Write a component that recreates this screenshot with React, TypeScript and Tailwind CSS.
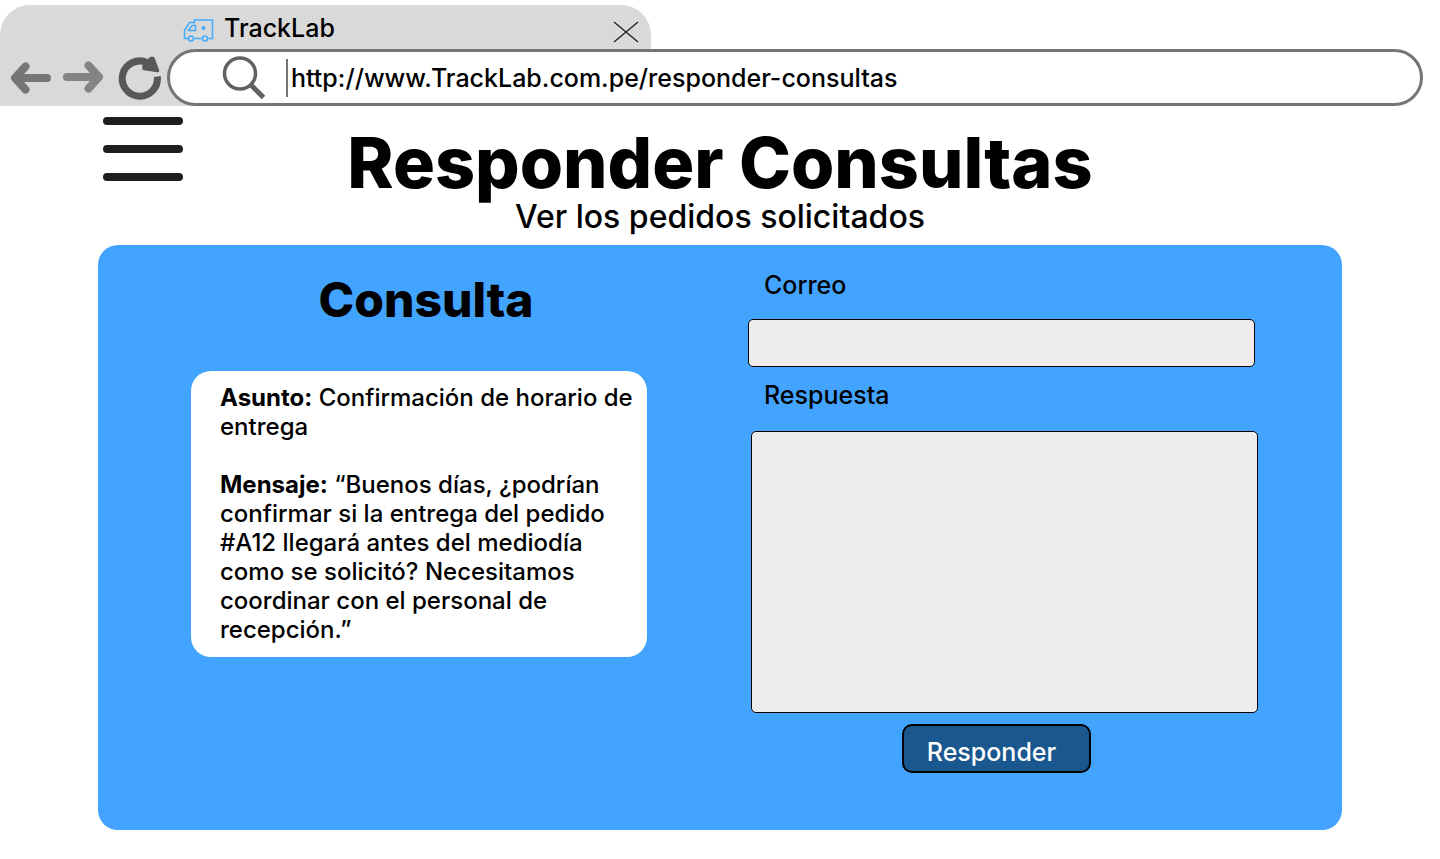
import React from "react";

function TruckIcon() {
  return (
    <svg width="32" height="26" viewBox="0 0 32 26" fill="none" stroke="#42acff" strokeWidth="1.5" aria-hidden="true" className="mt-[2px]">
      <path d="M5.800 22.500H2.500V14.500L7.500 6.500H12.500V4H30.500V22.500H26.500" />
      <path d="M12.500 22.500H19.500" />
      <path d="M10 9.500H13.500V14.500H6.500Z" />
      <circle cx="9" cy="22.500" r="2.500" />
      <circle cx="23" cy="22.500" r="2.500" />
      <circle cx="21.500" cy="12" r="1.200" fill="#42acff" />
    </svg>
  );
}

function Tab() {
  return (
    <div className="flex h-[44px] w-[651px] max-w-full items-center rounded-t-[30px] bg-[#d9d9d9] pt-[2px] pr-3 pl-[182px]">
      <TruckIcon />
      <span className="ml-[10px] text-[25px] leading-[30px]">TrackLab</span>
      <button type="button" aria-label="Cerrar pestaña" className="mt-2 ml-auto">
        <svg width="26" height="22" viewBox="0 0 26 22" stroke="#1e1e1e" strokeWidth="1.300" aria-hidden="true">
          <path d="M1 1L25 21M25 1L1 21" />
        </svg>
      </button>
    </div>
  );
}

function NavButtons() {
  return (
    <nav className="flex h-[57px] w-[195px] shrink-0 items-center bg-[#d9d9d9] pl-[10px]">
      <button type="button" aria-label="Atrás">
        <svg width="42" height="36" viewBox="0 0 42 36" fill="none" stroke="#757575" strokeWidth="8" strokeLinecap="round" strokeLinejoin="round" aria-hidden="true">
          <path d="M37 18H7M15.500 6.500L5 18L15.500 29.500" />
        </svg>
      </button>
      <button type="button" aria-label="Adelante" className="ml-[10px]">
        <svg width="42" height="36" viewBox="0 0 42 36" fill="none" stroke="#848484" strokeWidth="8" strokeLinecap="round" strokeLinejoin="round" aria-hidden="true">
          <path d="M5 17H35M26.500 5.500L37 17L26.500 28.500" />
        </svg>
      </button>
      <button type="button" aria-label="Recargar" className="ml-[13px]">
        <svg width="45" height="46" viewBox="0 0 45 46" fill="none" aria-hidden="true">
          <path d="M40.300 21.500A17.600 17.600 0 1 1 30 7.500" stroke="#585856" strokeWidth="7" />
          <path d="M34 3.500H36L40.500 15.500L27 13.500V11Z" fill="#585856" stroke="#585856" strokeWidth="3.500" strokeLinejoin="round" />
        </svg>
      </button>
    </nav>
  );
}

function AddressBar() {
  return (
    <div className="-ml-[28px] flex h-[57px] min-w-0 flex-1 items-center rounded-full border-[3px] border-[#757575] bg-white pr-8 pl-[51px]">
      <svg width="46" height="46" viewBox="0 0 46 46" fill="none" stroke="#616161" aria-hidden="true" className="shrink-0">
        <circle cx="19" cy="18.500" r="15.500" strokeWidth="3.500" />
        <path d="M29.500 29.500L42.500 42.500" strokeWidth="5" />
      </svg>
      <input
        type="text"
        aria-label="Dirección"
        defaultValue="http://www.TrackLab.com.pe/responder-consultas"
        className="ml-[19px] h-[38px] min-w-0 flex-1 border-l-2 border-[#757575] bg-transparent pl-[3px] text-[25px] outline-none"
      />
    </div>
  );
}

function Consulta() {
  return (
    <section className="flex flex-col pt-px">
      <h2 className="pl-[14px] text-center text-[48px] leading-[58px] font-extrabold">Consulta</h2>
      <div className="mt-[42px] rounded-[20px] bg-white pt-3 pr-3 pb-[13px] pl-[29px] text-[24px] leading-[29px]">
        <p>
          <strong className="font-bold">Asunto:</strong> Confirmación de horario de entrega
        </p>
        <p className="mt-[29px]">
          <strong className="font-bold">Mensaje:</strong> “Buenos días, ¿podrían confirmar si la entrega del pedido #A12
          llegará antes del mediodía como se solicitó? Necesitamos coordinar con el personal de recepción.”
        </p>
      </div>
    </section>
  );
}

function RespuestaForm() {
  return (
    <form className="flex flex-col" onSubmit={(e) => e.preventDefault()}>
      <label htmlFor="correo" className="pl-4 text-[25px] leading-[30px]">
        Correo
      </label>
      <input
        id="correo"
        type="email"
        className="mt-[19px] mr-[3px] h-[48px] rounded-[5px] border border-black bg-[#eeedeb] px-3 text-[25px]"
      />
      <label htmlFor="respuesta" className="mt-[13px] pl-4 text-[25px] leading-[30px]">
        Respuesta
      </label>
      <textarea
        id="respuesta"
        className="mt-[21px] ml-[3px] h-[282px] resize-none rounded-[5px] border border-black bg-[#eeedeb] p-3 text-[25px]"
      />
      <button
        type="submit"
        className="mt-[11px] mr-[13px] h-[49px] w-[189px] self-center rounded-[10px] border-2 border-black bg-[#1a578f] pt-[6px] pr-[10px] text-[25px] leading-[30px] text-white"
      >
        Responder
      </button>
    </form>
  );
}

export default function App() {
  return (
    <div className="min-h-screen bg-white pt-[5px] font-['Inter',sans-serif] font-medium text-black">
      <header>
        <Tab />
        <div className="flex pr-[17px]">
          <NavButtons />
          <AddressBar />
        </div>
      </header>
      <main className="px-[98px] pb-7">
        <div className="grid grid-cols-[100px_1fr_100px] pt-[11px]">
          <button type="button" aria-label="Menú" className="ml-[5px] flex w-[80px] flex-col gap-5 self-start">
            <span className="h-2 w-full rounded-full bg-[#1e1e1e]" />
            <span className="h-2 w-full rounded-full bg-[#1e1e1e]" />
            <span className="h-2 w-full rounded-full bg-[#1e1e1e]" />
          </button>
          <div className="text-center">
            <h1 className="pt-[11px] text-[70px] leading-[70px] font-extrabold">Responder Consultas</h1>
            <p className="text-[32px] leading-[38px]">Ver los pedidos solicitados</p>
          </div>
        </div>
        <div className="mt-[9px] grid grid-cols-[456fr_510fr] gap-[101px] rounded-[20px] bg-[#43a4ff] pt-[25px] pr-[84px] pb-[57px] pl-[93px]">
          <Consulta />
          <RespuestaForm />
        </div>
      </main>
    </div>
  );
}
